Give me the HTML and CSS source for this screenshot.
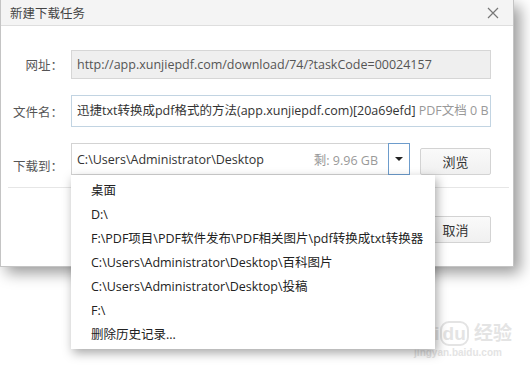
FILE: index.html
```html
<!DOCTYPE html>
<html lang="zh-CN">
<head>
  <meta charset="UTF-8" />
  <title>新建下载任务</title>
  <link rel="stylesheet" href="styles.css">
</head>
<body>

  <div class="dialog">
    <div class="titlebar">
      <span class="title">新建下载任务</span>
      <svg class="close" width="12" height="12" viewBox="0 0 12 12">
        <path d="M1 1 L11 11 M11 1 L1 11" stroke="#777" stroke-width="1.2" fill="none"/>
      </svg>
    </div>

    <div class="dialog-body">
      <div class="row">
        <div class="label">网址：</div>
        <div class="field readonly">http://app.xunjiepdf.com/download/74/?taskCode=00024157</div>
      </div>

      <div class="row">
        <div class="label">文件名：</div>
        <div class="field name">迅捷txt转换成pdf格式的方法(app.xunjiepdf.com)[20a69efd] <span class="muted">PDF文档 0 B</span></div>
      </div>

      <div class="row row-path">
        <div class="label">下载到：</div>
        <div class="combo">
          <div class="combo-input">
            <span>C:\Users\Administrator\Desktop</span>
            <span class="muted">剩: 9.96 GB</span>
          </div>
          <div class="combo-arrow"><span class="caret"></span></div>

          <!-- history list -->
          <ul class="dropdown">
            <li>桌面</li>
            <li>D:\</li>
            <li>F:\PDF项目\PDF软件发布\PDF相关图片\pdf转换成txt转换器</li>
            <li>C:\Users\Administrator\Desktop\百科图片</li>
            <li>C:\Users\Administrator\Desktop\投稿</li>
            <li>F:\</li>
            <li>删除历史记录...</li>
          </ul>
        </div>
        <button class="btn">浏览</button>
      </div>
    </div>

    <div class="dialog-footer">
      <button class="btn">确定</button>
      <button class="btn">取消</button>
    </div>
  </div>

  <div class="watermark">
    <div class="wm-big">Bai<span class="wm-du">du</span> 经验</div>
    <div class="wm-small">jingyan.baidu.com</div>
  </div>

</body>
</html>
```

FILE: styles.css
```css
body {
  margin: 0;
  padding: 0;
  background: #fff;
  color: #333;
  font-family: "Open Sans", "Noto Sans CJK SC", sans-serif;
  font-size: 12.5px;
  position: relative;
  height: 372px;
  overflow: hidden;
}

/* --- DIALOG --- */
.dialog {
  width: 512px;
  height: 266px;
  background: #fff;
  border: 1px solid #c4c4c4;
  border-top: none;
  box-shadow: 6px 6px 14px rgba(0, 0, 0, 0.4);
  display: flex;
  flex-direction: column;
}

.titlebar {
  height: 25px;
  background: #f4f4f4;
  border-bottom: 1px solid #dedede;
  display: flex;
  align-items: center;
  justify-content: space-between;
  padding: 0 14px 0 9px;
}

.title {
  font-size: 12.5px;
  color: #444;
}

.dialog-body {
  padding: 24px 22px 0 0;
  display: flex;
  flex-direction: column;
  gap: 16px;
}

.row {
  display: flex;
  align-items: center;
}

.label {
  width: 62px;
  margin-right: 8px;
  text-align: right;
  color: #555;
  white-space: nowrap;
}

.field {
  flex: 1;
  height: 27px;
  line-height: 27px;
  padding: 0 5px;
  border: 1px solid #d6d6d6;
  white-space: nowrap;
  overflow: hidden;
}

.field.readonly {
  background: #efefef;
  color: #555;
}

.field.name {
  height: 30px;
  line-height: 30px;
  border-color: #c2d4e2;
}

.muted {
  color: #999;
}

/* --- PATH COMBO --- */
.row-path {
  align-items: flex-end;
}

.combo {
  position: relative;
  display: flex;
  height: 32px;
  width: 339px;
}

.combo-input {
  flex: 1;
  display: flex;
  justify-content: space-between;
  align-items: center;
  padding: 0 10px 0 5px;
  border: 1px solid #d3d3d3;
  border-right: none;
}

.combo-arrow {
  width: 20px;
  border: 1px solid #6d9ccc;
  display: flex;
  align-items: center;
  justify-content: center;
}

.caret {
  width: 0;
  height: 0;
  border-left: 4px solid transparent;
  border-right: 4px solid transparent;
  border-top: 4px solid #222;
}

.btn {
  width: 71px;
  height: 27px;
  background: linear-gradient(#fafafa, #f0f0f0);
  border: 1px solid #d3d3d3;
  border-radius: 2px;
  color: #333;
  font-family: inherit;
  font-size: 13px;
  padding: 0;
}

.row-path .btn {
  margin-left: 10px;
}

.dropdown {
  position: absolute;
  top: 32px;
  left: 0;
  width: 364px;
  margin: 0;
  padding: 4px 0 2px;
  list-style: none;
  background: #fff;
  box-shadow: 2px 4px 10px rgba(0, 0, 0, 0.35);
  z-index: 5;
}

.dropdown li {
  height: 24px;
  line-height: 24px;
  padding-left: 20px;
  color: #222;
  white-space: nowrap;
}

/* --- FOOTER --- */
.dialog-footer {
  margin: 12px 4px 0 7px;
  border-top: 1px solid #e6e6e6;
  padding: 28px 18px 0 0;
  display: flex;
  justify-content: flex-end;
  gap: 9px;
}

/* --- WATERMARK --- */
.watermark {
  position: absolute;
  left: 410px;
  top: 322px;
  width: 96px;
  color: #e4e4e4;
  text-align: center;
  font-family: "Liberation Sans", "Noto Sans CJK SC", sans-serif;
  white-space: nowrap;
}

.wm-big {
  font-size: 19px;
  font-weight: bold;
  line-height: 24px;
}

.wm-du {
  border: 2px solid #e4e4e4;
  border-radius: 9px;
  padding: 0 1px;
}

.wm-small {
  font-size: 10px;
  font-weight: bold;
  line-height: 14px;
}
```
